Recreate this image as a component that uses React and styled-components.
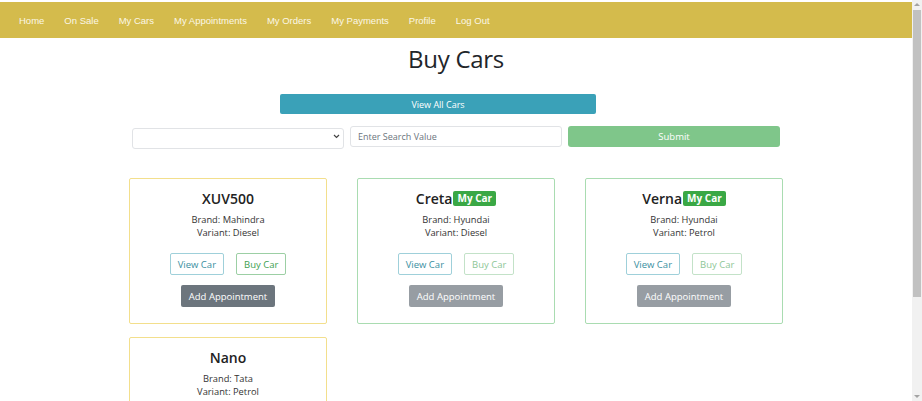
import React from "react";
import styled, { createGlobalStyle } from "styled-components";

const GlobalStyle = createGlobalStyle`
  body {
    margin: 0 10px 0 0;
    background: #fff;
    font-family: "Open Sans", "Noto Sans", sans-serif;
    color: #212529;
  }
`;

// the reference shows the browser's classic scrollbar on the right
const ScrollTrack = styled.div`
  position: fixed;
  top: 0;
  right: 0;
  width: 10px;
  height: 100vh;
  background: #f1f1f1;
  display: flex;
  flex-direction: column;
  align-items: center;
  justify-content: space-between;
  padding: 3px 0;
  box-sizing: border-box;
`;

const ScrollThumb = styled.div`
  position: absolute;
  top: 10px;
  left: 1px;
  width: 8px;
  height: 287px;
  background: #c1c1c1;
`;

const Arrow = styled.div`
  width: 0;
  height: 0;
  border-left: 3px solid transparent;
  border-right: 3px solid transparent;
  ${(p) => (p.$down ? "border-top: 3px solid #a3a3a3;" : "border-bottom: 3px solid #a3a3a3;")}
`;

const NavBar = styled.nav`
  margin-top: 2px;
  height: 36px;
  background-color: #d4bb4c;
  display: flex;
  align-items: center;
  padding-left: 9px;
`;

const NavLink = styled.a`
  font-family: "Liberation Sans", Arial, sans-serif;
  font-size: 9.5px;
  color: #fbf7e6;
  padding: 0 10px;
  text-decoration: none;
  white-space: nowrap;
`;

const Page = styled.div`
  width: 654px;
  margin: 0 auto;
  display: flex;
  flex-direction: column;
  align-items: center;
`;

const Title = styled.h1`
  margin: 6px 0 0;
  font-size: 24px;
  font-weight: 500;
  line-height: 30px;
  letter-spacing: -0.3px;
`;

const Controls = styled.div`
  width: 648px;
  display: flex;
  flex-direction: column;
  margin-top: 20px;
`;

const WideButton = styled.button`
  margin-left: 148px;
  width: 316px;
  height: 20px;
  border: none;
  border-radius: 2px;
  background-color: #3aa1b8;
  color: #fff;
  font-family: inherit;
  font-size: 9px;
`;

const SearchRow = styled.div`
  display: grid;
  grid-template-columns: 1fr 1fr 1fr;
  gap: 6px;
  margin-top: 12px;
`;

const SelectWrap = styled.div`
  position: relative;
`;

const Select = styled.select`
  width: 100%;
  height: 21px;
  appearance: none;
  border: 1px solid #e1e3e6;
  border-radius: 3px;
  background: #fff;
`;

const Chevron = styled.svg`
  position: absolute;
  right: 4px;
  top: 8px;
  pointer-events: none;
`;

const SearchInput = styled.input`
  height: 21px;
  box-sizing: border-box;
  border: 1px solid #e1e3e6;
  border-radius: 3px;
  padding: 0 7px;
  font-family: inherit;
  font-size: 9px;
  &::placeholder {
    color: #6c757d;
  }
`;

const SubmitButton = styled.button`
  height: 21px;
  border: none;
  border-radius: 3px;
  background-color: #7fc68a;
  color: #fff;
  font-family: inherit;
  font-size: 9.5px;
`;

const CardGrid = styled.div`
  width: 654px;
  display: grid;
  grid-template-columns: repeat(3, 198px);
  column-gap: 30px;
  row-gap: 13px;
  margin-top: 29px;
  align-items: start;
`;

const Card = styled.div`
  box-sizing: border-box;
  border: 1px solid ${(p) => (p.$mine ? "#a9dcb1" : "#f3df8c")};
  border-radius: 2px;
  padding: 9px 0 16px;
  display: flex;
  flex-direction: column;
  align-items: center;
`;

const CarName = styled.div`
  display: flex;
  align-items: center;
  height: 20px;
  font-size: 14px;
  font-weight: 600;
  color: #222;
`;

const Badge = styled.span`
  margin-left: 1px;
  background-color: #3aa845;
  color: #fff;
  font-size: 10px;
  font-weight: 700;
  padding: 1px 4px;
  border-radius: 2px;
  line-height: 13px;
`;

const Info = styled.div`
  margin-top: 5px;
  font-size: 9.3px;
  line-height: 13px;
  color: #333;
  text-align: center;
`;

const ButtonRow = styled.div`
  display: flex;
  gap: 12px;
  margin-top: 14px;
`;

const OutlineButton = styled.button`
  height: 22px;
  padding: 0 7px;
  background: #fff;
  border: 1px solid ${(p) => p.$color};
  color: ${(p) => p.$text};
  border-radius: 2px;
  font-family: inherit;
  font-size: 9.5px;
  opacity: ${(p) => (p.disabled ? 0.6 : 1)};
`;

const AppointmentButton = styled.button`
  margin-top: 10px;
  height: 22px;
  padding: 0 8px;
  border: none;
  border-radius: 2px;
  background-color: #6c757d;
  color: #fff;
  font-family: inherit;
  font-size: 9.5px;
  opacity: ${(p) => (p.disabled ? 0.7 : 1)};
`;

const cars = [
  { name: "XUV500", brand: "Mahindra", variant: "Diesel", mine: false },
  { name: "Creta", brand: "Hyundai", variant: "Diesel", mine: true },
  { name: "Verna", brand: "Hyundai", variant: "Petrol", mine: true },
  { name: "Nano", brand: "Tata", variant: "Petrol", mine: false },
];

const links = ["Home", "On Sale", "My Cars", "My Appointments", "My Orders", "My Payments", "Profile", "Log Out"];

const App = () => {
  return (
    <>
      <GlobalStyle />
      <NavBar>
        {links.map((l) => (
          <NavLink key={l} href="#">{l}</NavLink>
        ))}
      </NavBar>
      <Page>
        <Title>Buy Cars</Title>
        <Controls>
          <WideButton>View All Cars</WideButton>
          <SearchRow>
            <SelectWrap>
              <Select defaultValue="">
                <option value=""></option>
              </Select>
              <Chevron width="7" height="5" viewBox="0 0 7 5">
                <path d="M1 1l2.5 2.5L6 1" fill="none" stroke="#444" strokeWidth="1.2" />
              </Chevron>
            </SelectWrap>
            <SearchInput placeholder="Enter Search Value" />
            <SubmitButton disabled>Submit</SubmitButton>
          </SearchRow>
        </Controls>
        <CardGrid>
          {cars.map((c) => (
            <Card key={c.name} $mine={c.mine}>
              <CarName>
                {c.name}
                {c.mine && <Badge>My Car</Badge>}
              </CarName>
              <Info>
                Brand: {c.brand}
                <br />
                Variant: {c.variant}
              </Info>
              <ButtonRow>
                <OutlineButton $color="#9fd0da" $text="#3a8fa1">View Car</OutlineButton>
                <OutlineButton $color="#9ccfa4" $text="#3ea14f" disabled={c.mine}>Buy Car</OutlineButton>
              </ButtonRow>
              <AppointmentButton disabled={c.mine}>Add Appointment</AppointmentButton>
            </Card>
          ))}
        </CardGrid>
      </Page>
      <ScrollTrack>
        <Arrow />
        <ScrollThumb />
        <Arrow $down />
      </ScrollTrack>
    </>
  );
};

export default App;
